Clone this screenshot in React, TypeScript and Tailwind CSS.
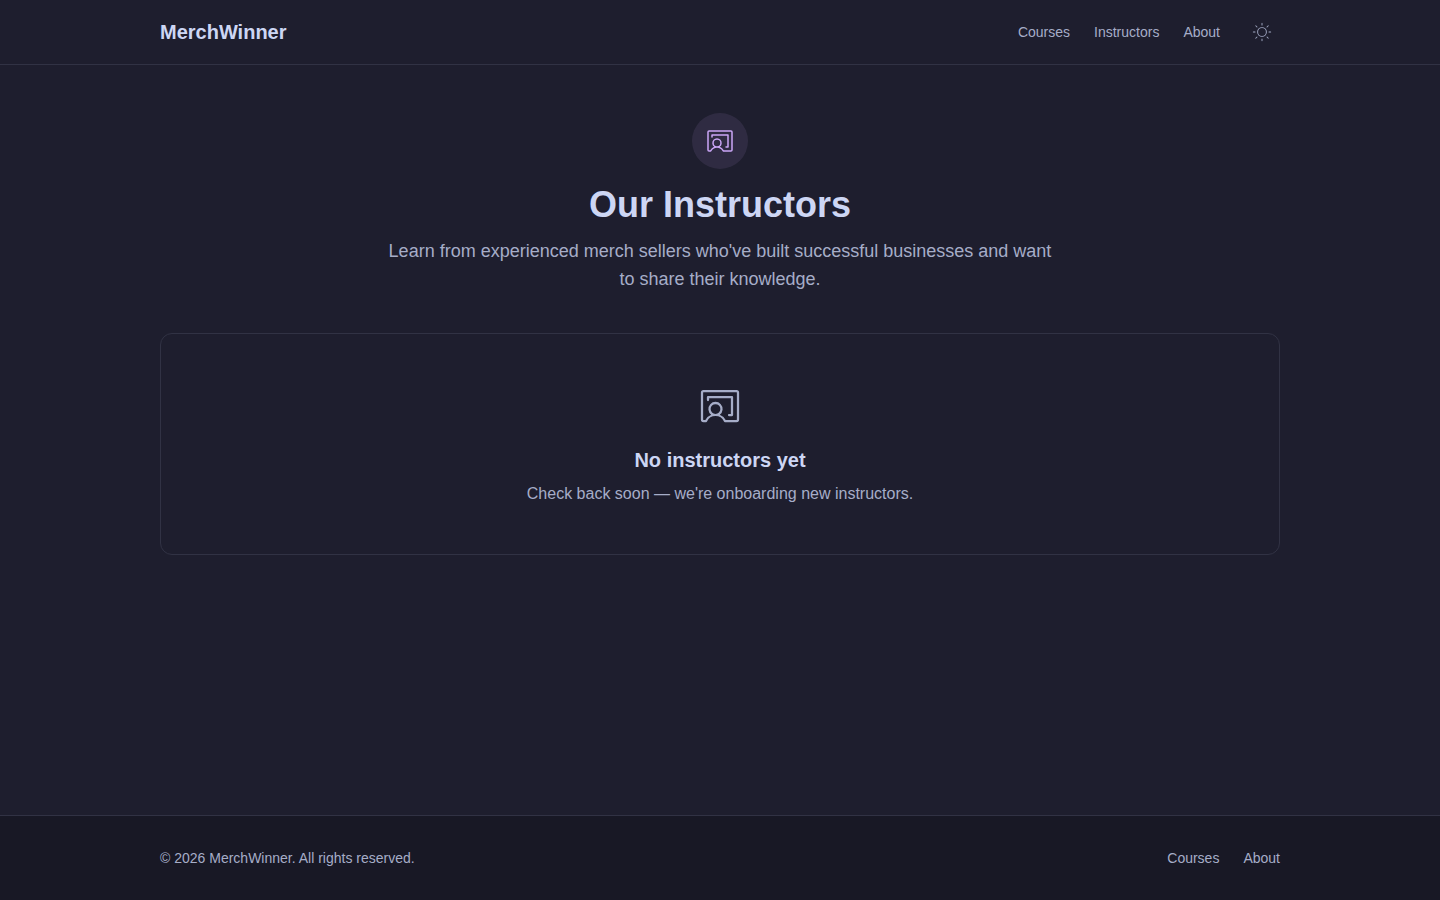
import { PiChalkboardTeacherLight, PiSunLight } from "react-icons/pi";

const navLinks = [
  { label: "Courses", href: "/courses" },
  { label: "Instructors", href: "/instructors" },
  { label: "About", href: "/about" },
];

const footerLinks = [
  { label: "Courses", href: "/courses" },
  { label: "About", href: "/about" },
];

const Header = () => {
  return (
    <header className="border-b border-[#313244]">
      <div className="mx-auto flex h-16 w-full max-w-6xl items-center justify-between px-4">
        <a href="/" className="text-xl font-bold text-[#cdd6f4]">
          MerchWinner
        </a>
        <nav className="flex items-center gap-6">
          {navLinks.map((link) => (
            <a key={link.href} href={link.href} className="text-sm text-[#a6adc8] hover:text-[#cdd6f4]">
              {link.label}
            </a>
          ))}
          <button type="button" aria-label="Toggle theme" className="rounded-lg p-2 text-[#a6adc8] hover:text-[#cdd6f4]">
            <PiSunLight className="size-5" />
          </button>
        </nav>
      </div>
    </header>
  )
}

const Footer = () => {
  return (
    <footer className="border-t border-[#313244] bg-[#181825]">
      <div className="mx-auto flex w-full max-w-6xl items-center justify-between px-4 py-8 text-sm text-[#a6adc8]">
        <p>© 2026 MerchWinner. All rights reserved.</p>
        <nav className="flex gap-6">
          {footerLinks.map((link) => (
            <a key={link.href} href={link.href} className="hover:text-[#cdd6f4]">
              {link.label}
            </a>
          ))}
        </nav>
      </div>
    </footer>
  )
}

const App = () => {
  return (
    <div className="flex min-h-screen flex-col bg-[#1e1e2e] font-['Liberation_Sans',Arial,sans-serif] text-[#cdd6f4]">
      <Header />
      <main className="mx-auto w-full max-w-6xl grow px-4 py-12">
        <div className="mb-10 flex flex-col items-center text-center">
          <div className="mb-4 flex size-14 items-center justify-center rounded-full bg-[#cba6f7]/10 text-[#cba6f7]">
            <PiChalkboardTeacherLight className="size-8" />
          </div>
          <h1 className="mb-3 text-4xl font-bold">Our Instructors</h1>
          <p className="max-w-2xl text-lg text-[#a6adc8]">
            Learn from experienced merch sellers who've built successful businesses and want to share their knowledge.
          </p>
        </div>
        <div className="flex flex-col items-center rounded-xl border border-[#313244] p-12 text-center">
          <PiChalkboardTeacherLight className="mb-4 size-12 text-[#a6adc8]" />
          <h2 className="mb-2 text-xl font-semibold">No instructors yet</h2>
          <p className="text-[#a6adc8]">Check back soon — we're onboarding new instructors.</p>
        </div>
      </main>
      <Footer />
    </div>
  )
}

export default App;
